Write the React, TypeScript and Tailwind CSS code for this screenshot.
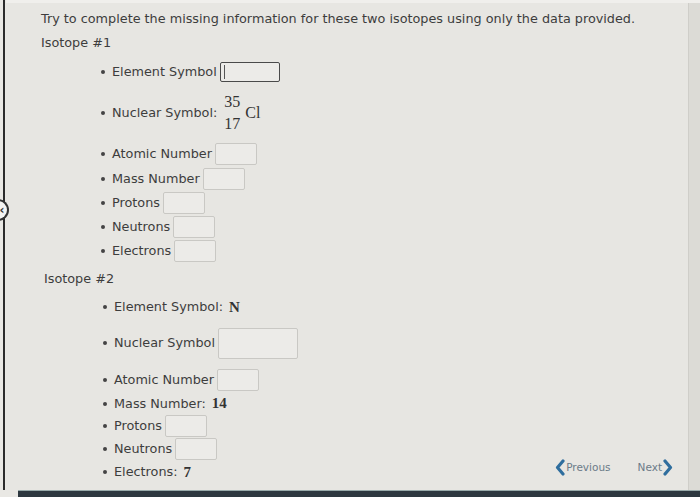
import React from "react";

const sans = { fontFamily: '"DejaVu Sans", Verdana, sans-serif' };

function Box({ w = "w-[42px]", h = "h-[22px]", focused = false }: { w?: string; h?: string; focused?: boolean }) {
  return (
    <span
      className={`ml-[3px] inline-flex items-center rounded-[2px] border bg-[#ecebe8] ${w} ${h} ${
        focused ? "border-[#4a4a4a]" : "border-[#c9c8c4]"
      }`}
    >
      {focused && <span className="ml-[3px] h-[14px] w-px bg-[#555]" />}
    </span>
  );
}

function Item({ children, className = "" }: { children: React.ReactNode; className?: string }) {
  return (
    <li className={`flex items-center ${className}`}>
      <span className="mr-[7px] h-[4px] w-[4px] rounded-full bg-[#444]" />
      {children}
    </li>
  );
}

function M({ children }: { children: React.ReactNode }) {
  return <span className="ml-[6px] font-['Liberation_Serif',serif] text-[15px] font-semibold text-[#333]">{children}</span>;
}

function Nav() {
  return (
    <div className="mb-[7px] mr-[15px] flex items-center gap-[27px] text-[10.5px] text-[#6b7b88]">
      <span className="flex items-center">
        <svg width="10" height="17" viewBox="0 0 10 17">
          <path d="M8 2 2.5 8.5 8 15" fill="none" stroke="#2f6e9e" strokeWidth="3.2" strokeLinecap="round" strokeLinejoin="round" />
        </svg>
        <span className="ml-px">Previous</span>
      </span>
      <span className="flex items-center">
        <span className="mr-px">Next</span>
        <svg width="10" height="17" viewBox="0 0 10 17">
          <path d="M2 2 7.5 8.5 2 15" fill="none" stroke="#2f6e9e" strokeWidth="3.2" strokeLinecap="round" strokeLinejoin="round" />
        </svg>
      </span>
    </div>
  );
}

export default function App() {
  return (
    <div className="flex h-[497px] w-[700px] flex-col overflow-hidden bg-[#e7e6e2] text-[12.8px] text-[#3d3d3d]" style={sans}>
      <div className="flex flex-1">
        {/* left frame edge */}
        <div className="relative z-10 w-[6px] shrink-0 bg-[#e9e8e4]">
          <div className="ml-[3px] h-full w-[2px] bg-[#2b2b2b]" />
          <div className="absolute left-[-5px] top-[199px] flex h-[22px] w-[14px] items-center justify-center rounded-r-full border-2 border-l-0 border-[#333] bg-[#f4f4f2] pl-[2px] text-[12px] font-bold leading-none text-[#333]">
            ‹
          </div>
        </div>

        <div className="flex flex-1 border-t-[3px] border-[#f0efec]">
          <div className="flex flex-1 flex-col pl-[35px] pt-[7px]">
            <p className="leading-[18px]">Try to complete the missing information for these two isotopes using only the data provided.</p>
            <p className="mt-[6px] leading-[18px]">Isotope #1</p>

            <ul className="ml-[60px] mt-[8px] flex flex-col">
              <Item className="h-[24px]">
                Element Symbol
                <Box w="w-[60px]" h="h-[20px]" focused />
              </Item>
              <Item className="mt-[6px] h-[46px]">
                Nuclear Symbol:
                <span className="ml-[7px] inline-flex items-center font-['Liberation_Serif',serif] text-[16px] font-medium text-[#333]">
                  <span className="flex flex-col items-end leading-[22px]">
                    <span>35</span>
                    <span>17</span>
                  </span>
                  <span className="ml-[5px]">Cl</span>
                </span>
              </Item>
              <Item className="mt-[6px] h-[24px]">
                Atomic Number
                <Box />
              </Item>
              <Item className="h-[25px]">
                Mass Number
                <Box />
              </Item>
              <Item className="h-[24px]">
                Protons
                <Box />
              </Item>
              <Item className="h-[24px]">
                Neutrons
                <Box />
              </Item>
              <Item className="h-[24px]">
                Electrons
                <Box />
              </Item>
            </ul>

            <p className="ml-[3px] mt-[7px] leading-[18px]">Isotope #2</p>

            <div className="flex items-end">
              <ul className="ml-[62px] mt-[8px] flex flex-col">
                <Item className="h-[22px]">
                  Element Symbol:
                  <M>N</M>
                </Item>
                <Item className="mt-[9px] h-[32px]">
                  Nuclear Symbol
                  <Box w="w-[80px]" h="h-[31px]" />
                </Item>
                <Item className="mt-[10px] h-[22px]">
                  Atomic Number
                  <Box />
                </Item>
                <Item className="mt-px h-[23px]">
                  Mass Number:
                  <M>14</M>
                </Item>
                <Item className="h-[22px]">
                  Protons
                  <Box />
                </Item>
                <Item className="h-[24px]">
                  Neutrons
                  <Box />
                </Item>
                <Item className="h-[22px]">
                  Electrons:
                  <M>7</M>
                </Item>
              </ul>
              <div className="ml-auto">
                <Nav />
              </div>
            </div>
          </div>

          {/* right frame edge */}
          <div className="w-[12px] shrink-0 border-l border-[#cfcec9] bg-[#dcdbd6]" />
        </div>
      </div>
      <div className="flex h-[7px] shrink-0">
        <div className="w-[18px] bg-[#e9e8e4]" />
        <div className="flex-1 border-t border-[#9aa] bg-[#2e3840]" />
      </div>
    </div>
  );
}
